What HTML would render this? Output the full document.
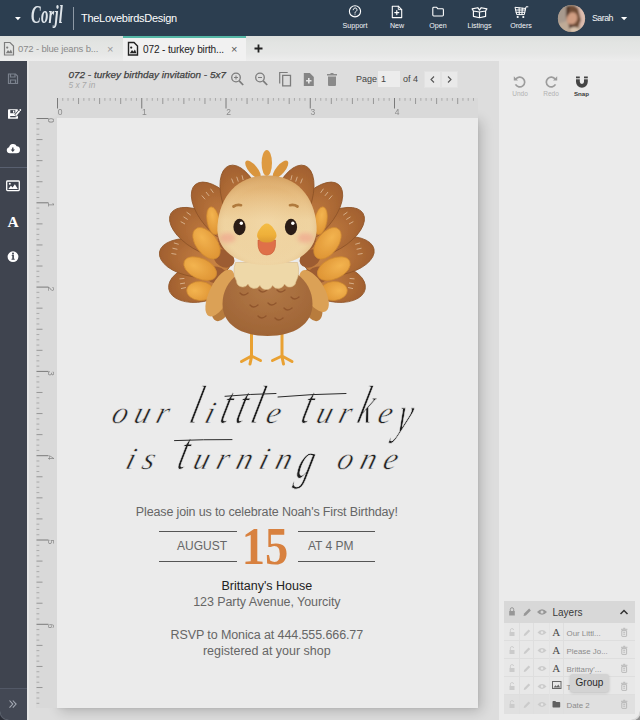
<!DOCTYPE html>
<html lang="en">
<head>
<meta charset="utf-8">
<title>Corjl - 072 - turkey birthday invitation - 5x7</title>
<style>
*{box-sizing:border-box;margin:0;padding:0}
html,body{width:640px;height:720px;overflow:hidden;background:#dcdcdc;font-family:"Liberation Sans",sans-serif;}
.abs{position:absolute}
#app{position:relative;width:640px;height:720px;overflow:hidden;background:#dddddd}
/* header */
#hdr{position:absolute;left:0;top:0;width:640px;height:36px;background:#2c3e50;color:#fff}
#hdr .logo{position:absolute;left:31px;top:0px;font-family:"Liberation Serif",serif;font-style:italic;font-weight:bold;font-size:26px;line-height:30px;color:#dfe5ea;letter-spacing:0.5px;transform:scaleX(.56);transform-origin:0 0;white-space:nowrap}
#hdr .div{position:absolute;left:73px;top:6.500px;width:1px;height:23px;background:#8d99a5}
#hdr .shop{position:absolute;left:81px;top:11px;font-size:11px;line-height:14px;color:#fff;letter-spacing:-0.28px;white-space:nowrap}
.nav{position:absolute;top:22px;font-size:7.1px;line-height:9px;color:#f4f6f8;text-align:center;width:50px;margin-left:-25px}
#hdr .user{position:absolute;left:592px;top:12px;font-size:8.8px;line-height:12px;color:#f4f6f8;letter-spacing:-0.5px}
/* tabs */
#tabs{position:absolute;left:0;top:36px;width:640px;height:25px;background:linear-gradient(#dcdfdd,#e2e4e2 25%,#e6e7e6 70%,#ededed)}
.tab{position:absolute;top:1px;height:24px;font-size:9.5px;line-height:24px;color:#8a8a8a;white-space:nowrap;letter-spacing:-0.15px}
.tab.act{font-size:10.100px;background:#f1f1f1;color:#222;border-top:2px solid #55b7a6;top:0;height:25px;line-height:23px}
.tab .x{position:absolute;top:0;font-size:11px;color:#9a9a9a}
.tab.act .x{color:#555}
/* sidebar */
#side{position:absolute;left:0;top:61px;width:27px;height:659px;background:#3f444f}
#side .ln{position:absolute;left:0;width:27px;height:1px;background:#596070}
/* toolbar */
#tool{position:absolute;left:28px;top:61px;width:471px;height:37px}
.ttl{position:absolute;left:40.500px;top:7.600px;font-size:9.950px;line-height:12px;font-style:italic;color:#3e3e3e;-webkit-text-stroke:.25px #3e3e3e;white-space:nowrap;letter-spacing:0}
.sub{position:absolute;left:40.500px;top:19.300px;font-size:8.300px;line-height:11px;font-style:italic;color:#a8a8a8;white-space:nowrap}
.pg{position:absolute;top:12px;font-size:9px;line-height:12px;color:#444;white-space:nowrap}
.pgin{position:absolute;left:350px;top:10px;width:22px;height:16px;background:#ececec;font-size:9px;line-height:16px;color:#444;padding-left:3px}
.pgb{position:absolute;top:10px;width:17px;height:17px;background:#e9e9e9;border:1px solid #e2e2e2}
/* page */
#page{position:absolute;left:57px;top:118px;width:421px;height:590px;background:#ebebeb;box-shadow:3px 3px 12px rgba(0,0,0,.2),0 0 3px rgba(0,0,0,.08)}
.inv{position:absolute;left:-0.700px;width:421px;text-align:center;white-space:nowrap;color:#666}
.script{font-family:"Liberation Serif",serif;font-style:italic;color:#1e1e1e;font-size:31px;line-height:60px;letter-spacing:6.5px;transform:skewX(-16deg);-webkit-text-stroke:.5px #ebebeb}
.script b{font-weight:normal;display:inline-block;transform:scaleY(1.75);transform-origin:50% 67.5%}
.script i{display:inline-block;transform:scaleY(1.7);transform-origin:50% 45%}
/* right */
#right{position:absolute;left:499px;top:61px;width:141px;height:659px;background:#ebebeb}
.rlab{position:absolute;top:28.500px;font-size:6.5px;line-height:8px;width:40px;margin-left:-20px;text-align:center;color:#b2b2b2}
#layers{position:absolute;left:5px;top:540px;width:131px;height:113px;background:#e8e8e8}
#layers .lh{position:absolute;left:0;top:0;width:131px;height:22px;background:#d8d8d8}
#layers .lh span{position:absolute;left:48.500px;top:5px;font-size:10px;line-height:14px;color:#3a3a3a}
.row{position:absolute;left:0;width:131px;height:18px;border-bottom:1px solid #dedede}
.row .nm{position:absolute;left:62.500px;top:4.500px;font-size:7.900px;line-height:11px;color:#8c8c8c;white-space:nowrap}
.row .ta{position:absolute;left:48.200px;top:1.500px;font-family:"Liberation Serif",serif;font-size:11px;line-height:14px;color:#4a4a4a}
.vl{position:absolute;top:22px;width:1px;height:91px;background:#dedede}
#tip{position:absolute;left:71px;top:613px;width:39px;height:18px;border-radius:3px;background:#d3d3d3;box-shadow:0 1px 3px rgba(0,0,0,.18);font-size:10px;line-height:18px;text-align:center;color:#2a2a2a}
</style>
</head>
<body>
<div id="app">

<!-- ===== top header ===== -->
<div id="hdr">
  <svg class="abs" style="left:15px;top:17px" width="6" height="4" viewBox="0 0 6 4"><path d="M0 0h5.800L2.900 3.200z" fill="#fff"/></svg>
  <div class="logo">Corjl</div>
  <div class="div"></div>
  <div class="shop">TheLovebirdsDesign</div>

  <svg class="abs" style="left:335px;top:0" width="210" height="22" viewBox="335 0 210 22" fill="none" stroke="#fff" stroke-width="1.1" stroke-linecap="round" stroke-linejoin="round">
    <!-- support -->
    <circle cx="355" cy="11.3" r="5.6"/>
    <path d="M353.2 9.8a1.9 1.9 0 1 1 2.9 1.6c-.7.5-1.1.8-1.1 1.7" stroke-width="1"/>
    <circle cx="355" cy="14.7" r=".55" fill="#fff" stroke="none"/>
    <!-- new -->
    <path d="M392.3 6.2h6l3.4 3.4v8h-9.4z"/><path d="M398.3 6.2v3.4h3.4" stroke-width=".9"/>
    <path d="M396.8 10.6v4M394.8 12.6h4" stroke-width="1.2"/>
    <!-- open -->
    <path d="M432.8 8.2q0-.9.9-.9h3l1.2 1.5h4.6q.9 0 .9.9v5.400q0 .9-.9.9h-8.800q-.9 0-.9-.9z"/>
    <!-- listings -->
    <path d="M473.400 11.200v5.200l6.100 1.300 6.100-1.300v-5.200M479.500 11.800v5.800M473.400 11l6.100 1 6.100-1M473.400 11l-1.300-2.100 5.700-1.200 1.700 2.400 1.700-2.400 5.700 1.200-1.300 2.100" stroke-width="1.150"/>
    <!-- orders -->
    <g transform="translate(1041.500 0) scale(-1 1)">
    <path d="M513.600 6.800h1.900l1.700 7.800h7.600l1.700-7.300-10.600 1.200M516.400 10h9.300M516.800 12.300h8.600M519.200 8.200l.4 6.400M522.400 7.800l-.2 6.800" stroke-width="1"/>
    <circle cx="518.200" cy="17" r="1.100" fill="#fff" stroke="none"/><circle cx="523.800" cy="17" r="1.100" fill="#fff" stroke="none"/>
    </g>
  </svg>
  <div class="nav" style="left:355px">Support</div>
  <div class="nav" style="left:397px">New</div>
  <div class="nav" style="left:438px">Open</div>
  <div class="nav" style="left:479.500px">Listings</div>
  <div class="nav" style="left:521px">Orders</div>

  <!-- avatar -->
  <svg class="abs" style="left:557px;top:4px" width="29" height="29" viewBox="0 0 29 29">
    <defs>
      <clipPath id="av"><circle cx="14.500" cy="14.500" r="13.600"/></clipPath>
      <filter id="avb" x="-20%" y="-20%" width="140%" height="140%"><feGaussianBlur stdDeviation="1.1"/></filter>
    </defs>
    <g clip-path="url(#av)">
      <rect width="29" height="29" fill="#a99a8b"/>
      <g filter="url(#avb)">
        <rect x="0" y="0" width="12" height="29" fill="#a89a8e"/>
        <path d="M19 0h10v29h-8z" fill="#dcbcae"/>
        <path d="M0 20l10-3 12 3 4 9H0z" fill="#bfab97"/>
        <path d="M9 3q6-3 12 1l3 12-3 8-9-2-3-9z" fill="#6e4b36"/>
        <ellipse cx="15" cy="14.500" rx="5.200" ry="6.300" fill="#d09d82" transform="rotate(20 15 14.500)"/>
        <path d="M10 2l2.500 0-1 9-2 1z" fill="#4a3428"/>
        <path d="M12 20l6 1-1 8h-5z" fill="#56392c"/>
        <ellipse cx="17" cy="26" rx="5" ry="3" fill="#d8c3ad"/>
      </g>
    </g>
  </svg>
  <div class="user">Sarah</div>
  <svg class="abs" style="left:620.800px;top:17px" width="7" height="4" viewBox="0 0 7 4"><path d="M0 0h6.200L3.100 3.200z" fill="#fff"/></svg>
</div>

<!-- ===== tabs ===== -->
<div id="tabs">
  <div class="tab" style="left:0;width:122px;padding-left:18px">072 - blue jeans b...<span class="x" style="left:107px">×</span></div>
  <div class="tab act" style="left:123px;width:123px;padding-left:20px">072 - turkey birth...<span class="x" style="left:108px">×</span></div>
  <svg class="abs" style="left:0;top:0" width="280" height="25" viewBox="0 0 280 25">
    <g fill="none" stroke="#7d7d7d" stroke-width="1.200"><path d="M4.500 6.500h5.500l3.500 3.500v9h-9z"/><path d="M5.800 17.200l2.200-3.200 1.500 1.700 1.400-2.300 1.600 3.800z" fill="#7d7d7d" stroke="none"/><circle cx="7.200" cy="11.600" r="1.100" fill="#7d7d7d" stroke="none"/></g>
    <g fill="none" stroke="#222" stroke-width="1.400"><path d="M128.500 6.500h5.500l3.500 3.500v9h-9z"/><path d="M129.800 17.200l2.200-3.200 1.500 1.700 1.400-2.300 1.600 3.800z" fill="#222" stroke="none"/><circle cx="131.200" cy="11.600" r="1.100" fill="#222" stroke="none"/></g>
    <path d="M258.500 8.500v8M254.500 12.500h8" stroke="#222" stroke-width="1.800"/>
  </svg>
</div>

<!-- ===== left sidebar ===== -->
<div id="side">
  <div class="ln" style="top:106px"></div>
  <div class="abs" style="left:0;top:628px;width:27px;height:31px;background:#434854"></div>
  <div class="ln" style="top:627px;background:#525866"></div>
  <svg class="abs" style="left:0;top:0" width="27" height="659" viewBox="0 61 27 659">
    <!-- save (disabled) -->
    <g fill="none" stroke="#7b818d" stroke-width="1.200"><path d="M8.500 74h7l2 2v7.500h-9z"/><path d="M10.500 74v3h4.500v-3M10.500 83.500v-3.500h5v3.500"/></g>
    <!-- save as -->
    <rect x="8" y="109.300" width="10" height="9.500" rx=".9" fill="#fff"/>
    <rect x="10.300" y="110.100" width="5" height="3.100" fill="#3f444f"/><rect x="13" y="110.600" width="1.300" height="2.100" fill="#fff"/>
    <rect x="10.200" y="116" width="5.600" height="1.300" fill="#3f444f"/>
    <path d="M15.600 115.600l4.600-5.400" stroke="#3f444f" stroke-width="3.200" fill="none"/>
    <path d="M15.700 115.500l3.800-4.500" stroke="#fff" stroke-width="1.700" fill="none"/><circle cx="20.300" cy="110" r=".9" fill="#fff"/>
    <!-- cloud download -->
    <path d="M9.800 153.300a3.100 3.100 0 0 1-.7-6.100 4 4 0 0 1 7.600-.9 3.500 3.500 0 0 1-.4 7z" fill="#fff"/>
    <path d="M12.100 147.600v2h-1.500l2.200 2.300 2.200-2.300h-1.500v-2z" fill="#3f444f"/>
    <!-- image -->
    <rect x="6.700" y="181" width="12.600" height="9.600" rx=".8" fill="none" stroke="#fff" stroke-width="1.300"/>
    <path d="M8.300 189l2.600-3.300 1.700 1.700 2.300-3.200 2.900 4.800z" fill="#fff"/><circle cx="9.800" cy="183.800" r="1" fill="#fff"/>
    <!-- text -->
    <text x="13" y="226.500" text-anchor="middle" font-family="Liberation Serif, serif" font-weight="bold" font-size="15.500" fill="#fff">A</text>
    <!-- info -->
    <circle cx="13" cy="256.700" r="5.400" fill="#fff"/>
    <path d="M12 254.800h1.900v4h.8v.9h-3.200v-.9h.8v-3.100h-.8z" fill="#3f444f"/><circle cx="13" cy="253.500" r=".95" fill="#3f444f"/>
    <!-- expand -->
    <path d="M9.500 700.500l3.300 3.600-3.300 3.600M12.800 700.500l3.300 3.600-3.300 3.600" fill="none" stroke="#a3a8b2" stroke-width="1.100"/>
  </svg>
</div>
<div class="abs" style="left:27px;top:61px;width:2px;height:659px;background:#e6e6e6"></div>

<!-- ===== canvas toolbar ===== -->
<div id="tool">
  <div class="ttl">072 - turkey birthday invitation - 5x7</div>
  <div class="sub">5 x 7 in</div>
  <svg class="abs" style="left:200px;top:8.500px" width="120" height="20" viewBox="228 69 120 20">
    <g fill="none" stroke="#7c7c7c" stroke-width="1.300">
      <circle cx="236" cy="76.500" r="4.300"/><path d="M239.200 79.800l4 4.200" stroke-width="1.700"/><path d="M234 76.500h4M236 74.500v4" stroke-width="1"/>
      <circle cx="260" cy="76.500" r="4.300"/><path d="M263.200 79.800l4 4.200" stroke-width="1.700"/><path d="M258 76.500h4" stroke-width="1"/>
      <path d="M282.700 74.300h7.800v10.500h-7.800z"/><path d="M279.700 82.500v-11h8" stroke-width="1.200"/>
    </g>
    <path d="M303.800 72h6l4 4v9h-10z" fill="#858585"/><path d="M308.800 77v5.400M306.100 79.700h5.400" stroke="#e6e6e6" stroke-width="1.600"/>
    <path d="M328 75.500h8v8.500q0 1-1 1h-6q-1 0-1-1zM327 73h3.200l.6-1h2.400l.6 1h3.200v1.500h-10z" fill="#8a8a8a"/>
  </svg>
  <div class="pg" style="left:328px">Page</div>
  <div class="pgin">1</div>
  <div class="pg" style="left:375px">of 4</div>
  <div class="pgb" style="left:396px"></div>
  <div class="pgb" style="left:413px"></div>
  <svg class="abs" style="left:396px;top:10px" width="34" height="17" viewBox="0 0 34 17"><path d="M10 5.500l-3 3 3 3M24 5.500l3 3-3 3" fill="none" stroke="#555" stroke-width="1.100"/></svg>
</div>

<!-- ===== rulers ===== -->
<svg class="abs" style="left:0;top:0;z-index:1" width="640" height="720" viewBox="0 0 640 720" font-family="Liberation Sans, sans-serif">
  <rect x="57" y="98" width="421" height="20" fill="#d9d9d9"/>
  <rect x="36" y="118" width="21" height="590" fill="#d9d9d9"/>
<path d="M62.77 98v2.8M68.03 98v2.8M73.30 98v2.8M83.83 98v2.8M89.09 98v2.8M94.36 98v2.8M104.89 98v2.8M110.16 98v2.8M115.42 98v2.8M125.95 98v2.8M131.22 98v2.8M136.48 98v2.8M147.02 98v2.8M152.28 98v2.8M157.55 98v2.8M168.08 98v2.8M173.34 98v2.8M178.61 98v2.8M189.14 98v2.8M194.41 98v2.8M199.67 98v2.8M210.20 98v2.8M215.47 98v2.8M220.73 98v2.8M231.27 98v2.8M236.53 98v2.8M241.80 98v2.8M252.33 98v2.8M257.59 98v2.8M262.86 98v2.8M273.39 98v2.8M278.66 98v2.8M283.92 98v2.8M294.45 98v2.8M299.72 98v2.8M304.98 98v2.8M315.52 98v2.8M320.78 98v2.8M326.05 98v2.8M336.58 98v2.8M341.84 98v2.8M347.11 98v2.8M357.64 98v2.8M362.91 98v2.8M368.17 98v2.8M378.70 98v2.8M383.97 98v2.8M389.23 98v2.8M399.77 98v2.8M405.03 98v2.8M410.30 98v2.8M420.83 98v2.8M426.09 98v2.8M431.36 98v2.8M441.89 98v2.8M447.16 98v2.8M452.42 98v2.8M462.95 98v2.8M468.22 98v2.8M473.48 98v2.8" stroke="#a6a6a6" stroke-width="0.9" fill="none"/>
<path d="M78.56 98v6M99.62 98v6M120.69 98v6M162.81 98v6M183.88 98v6M204.94 98v6M247.06 98v6M268.12 98v6M289.19 98v6M331.31 98v6M352.38 98v6M373.44 98v6M415.56 98v6M436.62 98v6M457.69 98v6" stroke="#8e8e8e" stroke-width="0.9" fill="none"/>
<path d="M57.50 98v10.5M141.75 98v10.5M226.00 98v10.5M310.25 98v10.5M394.50 98v10.5" stroke="#7a7a7a" stroke-width="1" fill="none"/>
<text x="57.8" y="115.3" font-size="8.5" fill="#8a8a8a">0</text>
<text x="142.1" y="115.3" font-size="8.5" fill="#8a8a8a">1</text>
<text x="226.3" y="115.3" font-size="8.5" fill="#8a8a8a">2</text>
<text x="310.6" y="115.3" font-size="8.5" fill="#8a8a8a">3</text>
<text x="394.8" y="115.3" font-size="8.5" fill="#8a8a8a">4</text>
<path d="M36.5 123.77h2.8M36.5 129.04h2.8M36.5 134.31h2.8M36.5 144.84h2.8M36.5 150.11h2.8M36.5 155.38h2.8M36.5 165.92h2.8M36.5 171.19h2.8M36.5 176.46h2.8M36.5 186.99h2.8M36.5 192.26h2.8M36.5 197.53h2.8M36.5 208.07h2.8M36.5 213.34h2.8M36.5 218.61h2.8M36.5 229.14h2.8M36.5 234.41h2.8M36.5 239.68h2.8M36.5 250.22h2.8M36.5 255.49h2.8M36.5 260.76h2.8M36.5 271.29h2.8M36.5 276.56h2.8M36.5 281.83h2.8M36.5 292.37h2.8M36.5 297.64h2.8M36.5 302.91h2.8M36.5 313.44h2.8M36.5 318.71h2.8M36.5 323.98h2.8M36.5 334.52h2.8M36.5 339.79h2.8M36.5 345.06h2.8M36.5 355.59h2.8M36.5 360.86h2.8M36.5 366.13h2.8M36.5 376.67h2.8M36.5 381.94h2.8M36.5 387.21h2.8M36.5 397.74h2.8M36.5 403.01h2.8M36.5 408.28h2.8M36.5 418.82h2.8M36.5 424.09h2.8M36.5 429.36h2.8M36.5 439.89h2.8M36.5 445.16h2.8M36.5 450.43h2.8M36.5 460.97h2.8M36.5 466.24h2.8M36.5 471.51h2.8M36.5 482.04h2.8M36.5 487.31h2.8M36.5 492.58h2.8M36.5 503.12h2.8M36.5 508.39h2.8M36.5 513.66h2.8M36.5 524.19h2.8M36.5 529.46h2.8M36.5 534.73h2.8M36.5 545.27h2.8M36.5 550.54h2.8M36.5 555.81h2.8M36.5 566.34h2.8M36.5 571.61h2.8M36.5 576.88h2.8M36.5 587.42h2.8M36.5 592.69h2.8M36.5 597.96h2.8M36.5 608.49h2.8M36.5 613.76h2.8M36.5 619.03h2.8M36.5 629.57h2.8M36.5 634.84h2.8M36.5 640.11h2.8M36.5 650.64h2.8M36.5 655.91h2.8M36.5 661.18h2.8M36.5 671.72h2.8M36.5 676.99h2.8M36.5 682.26h2.8M36.5 692.79h2.8M36.5 698.06h2.8M36.5 703.33h2.8" stroke="#a6a6a6" stroke-width="0.9" fill="none"/>
<path d="M36.5 139.57h6M36.5 160.65h6M36.5 181.72h6M36.5 223.88h6M36.5 244.95h6M36.5 266.02h6M36.5 308.17h6M36.5 329.25h6M36.5 350.32h6M36.5 392.47h6M36.5 413.55h6M36.5 434.62h6M36.5 476.77h6M36.5 497.85h6M36.5 518.92h6M36.5 561.08h6M36.5 582.15h6M36.5 603.22h6M36.5 645.38h6M36.5 666.45h6M36.5 687.52h6" stroke="#8e8e8e" stroke-width="0.9" fill="none"/>
<path d="M36.5 118.50h12M36.5 202.80h12M36.5 287.10h12M36.5 371.40h12M36.5 455.70h12M36.5 540.00h12M36.5 624.30h12" stroke="#7a7a7a" stroke-width="1" fill="none"/>
<text transform="translate(48.3 118.0) rotate(90)" font-size="8.5" fill="#8a8a8a">0</text>
<text transform="translate(48.3 202.3) rotate(90)" font-size="8.5" fill="#8a8a8a">1</text>
<text transform="translate(48.3 286.6) rotate(90)" font-size="8.5" fill="#8a8a8a">2</text>
<text transform="translate(48.3 370.9) rotate(90)" font-size="8.5" fill="#8a8a8a">3</text>
<text transform="translate(48.3 455.2) rotate(90)" font-size="8.5" fill="#8a8a8a">4</text>
<text transform="translate(48.3 539.5) rotate(90)" font-size="8.5" fill="#8a8a8a">5</text>
<text transform="translate(48.3 623.8) rotate(90)" font-size="8.5" fill="#8a8a8a">6</text>
</svg>

<!-- ===== page ===== -->
<div id="page">
  <div class="inv script" style="top:265px;letter-spacing:6.700px">our <b>l</b>i<b>t</b><b>t</b><b>l</b>e <b>t</b>ur<b>k</b>e<i>y</i></div>
  <div class="inv script" style="top:310.500px;letter-spacing:7.600px">is <b>t</b>urnin<i>g</i> one</div>
  <svg class="abs" style="left:0;top:0" width="421" height="590" viewBox="57 118 421 590" fill="none" stroke="#2a2a2a" stroke-width="1" stroke-linecap="round">
    <path d="M225 396.300q26-2.300 51-2.800"/><path d="M278 397q34-3 68-3.500"/><path d="M174.500 440.600q29-1.200 57.500-1"/>
  </svg>
  <div class="inv" style="top:386px;font-size:12.500px;line-height:16px;letter-spacing:-0.145px">Please join us to celebrate Noah's First Birthday!</div>
  <div class="abs" style="left:102px;top:413px;width:78px;height:1px;background:#555"></div>
  <div class="abs" style="left:102px;top:443px;width:78px;height:1px;background:#555"></div>
  <div class="abs" style="left:241px;top:413px;width:77px;height:1px;background:#555"></div>
  <div class="abs" style="left:241px;top:443px;width:77px;height:1px;background:#555"></div>
  <div class="abs" style="left:120px;top:420px;font-size:12px;line-height:16px;color:#666">AUGUST</div>
  <div class="abs" style="left:251px;top:420px;font-size:12px;line-height:16px;color:#666;white-space:nowrap">AT 4 PM</div>
  <div class="abs" style="left:178px;top:400px;width:60px;text-align:center;font-family:'Liberation Serif',serif;font-weight:bold;font-size:53.500px;line-height:56px;color:#d8813f;transform:scaleX(.868)">15</div>
  <div class="inv" style="top:460px;font-size:12.500px;line-height:16px;color:#222">Brittany's House</div>
  <div class="inv" style="top:476px;font-size:12.500px;line-height:16px;letter-spacing:-0.07px">123 Party Avenue, Yourcity</div>
  <div class="inv" style="top:509px;font-size:12.500px;line-height:16px;letter-spacing:-0.1px">RSVP to Monica at 444.555.666.77</div>
  <div class="inv" style="top:525px;font-size:12.500px;line-height:16px">registered at your shop</div>
</div>

<!-- ===== turkey ===== -->
<svg class="abs" style="left:0;top:0" width="640" height="720" viewBox="0 0 640 720">
  <defs>
    <radialGradient id="fd" cx="50%" cy="80%" r="85%"><stop offset="0" stop-color="#c98443"/><stop offset=".5" stop-color="#b5713a"/><stop offset="1" stop-color="#9e5d2d"/></radialGradient>
    <radialGradient id="fo" cx="50%" cy="30%" r="80%"><stop offset="0" stop-color="#f3b450"/><stop offset="1" stop-color="#dc9030"/></radialGradient>
    <linearGradient id="hl" x1="0" y1="0" x2="0" y2="1"><stop offset="0" stop-color="#d9a461"/><stop offset=".22" stop-color="#e6bc80"/><stop offset=".5" stop-color="#efd3a0"/><stop offset="1" stop-color="#efd5a4"/></linearGradient>
    <radialGradient id="hd" cx="50%" cy="55%" r="56%"><stop offset="0" stop-color="#f4dcae" stop-opacity=".5"/><stop offset=".75" stop-color="#eccb96" stop-opacity="0"/><stop offset="1" stop-color="#cf9a5c" stop-opacity=".55"/></radialGradient>
    <linearGradient id="bk" x1="0" y1="0" x2="0" y2="1"><stop offset="0" stop-color="#f4bd45"/><stop offset=".6" stop-color="#eeb03a"/><stop offset="1" stop-color="#dc9a30"/></linearGradient>
    <radialGradient id="bd" cx="50%" cy="35%" r="75%"><stop offset="0" stop-color="#b27947"/><stop offset="1" stop-color="#9c6133"/></radialGradient>
    <filter id="soft" x="-10%" y="-10%" width="120%" height="120%"><feGaussianBlur stdDeviation=".55"/></filter>
    <filter id="soft2" x="-30%" y="-30%" width="160%" height="160%"><feGaussianBlur stdDeviation="2.200"/></filter>
  </defs>
  <g filter="url(#soft)">
<ellipse cx="200.2" cy="283.0" rx="18.8" ry="32.0" transform="rotate(-101 200.2 283.0)" fill="url(#fd)" stroke="#8e5327" stroke-width=".8"/>
<ellipse cx="195.0" cy="258.0" rx="18.8" ry="36.0" transform="rotate(-80.5 195.0 258.0)" fill="url(#fd)" stroke="#8e5327" stroke-width=".8"/>
<ellipse cx="202.8" cy="232.2" rx="18.8" ry="37.0" transform="rotate(-59.5 202.8 232.2)" fill="url(#fd)" stroke="#8e5327" stroke-width=".8"/>
<ellipse cx="219.1" cy="212.9" rx="18.8" ry="37.0" transform="rotate(-40 219.1 212.9)" fill="url(#fd)" stroke="#8e5327" stroke-width=".8"/>
<ellipse cx="241.7" cy="200.5" rx="18.8" ry="37.0" transform="rotate(-20 241.7 200.5)" fill="url(#fd)" stroke="#8e5327" stroke-width=".8"/>
<ellipse cx="333.8" cy="283.0" rx="18.8" ry="32.0" transform="rotate(101 333.8 283.0)" fill="url(#fd)" stroke="#8e5327" stroke-width=".8"/>
<ellipse cx="338.7" cy="256.1" rx="18.8" ry="36.0" transform="rotate(79 338.7 256.1)" fill="url(#fd)" stroke="#8e5327" stroke-width=".8"/>
<ellipse cx="331.2" cy="232.2" rx="18.8" ry="37.0" transform="rotate(59.5 331.2 232.2)" fill="url(#fd)" stroke="#8e5327" stroke-width=".8"/>
<ellipse cx="314.9" cy="212.9" rx="18.8" ry="37.0" transform="rotate(40 314.9 212.9)" fill="url(#fd)" stroke="#8e5327" stroke-width=".8"/>
<ellipse cx="292.3" cy="200.5" rx="18.8" ry="37.0" transform="rotate(20 292.3 200.5)" fill="url(#fd)" stroke="#8e5327" stroke-width=".8"/>
<path d="M181.0 288.6L185.9 287.5" stroke="#f2dcc0" stroke-width="0.8" opacity=".75"/>
<path d="M180.1 283.8L185.0 283.0" stroke="#f2dcc0" stroke-width="0.8" opacity=".75"/>
<path d="M179.5 278.9L184.4 278.4" stroke="#f2dcc0" stroke-width="0.8" opacity=".75"/>
<path d="M171.4 253.5L176.3 254.3" stroke="#f2dcc0" stroke-width="0.8" opacity=".75"/>
<path d="M172.5 248.2L177.4 249.3" stroke="#f2dcc0" stroke-width="0.8" opacity=".75"/>
<path d="M173.9 242.9L178.7 244.3" stroke="#f2dcc0" stroke-width="0.8" opacity=".75"/>
<path d="M180.7 221.6L185.0 224.0" stroke="#f2dcc0" stroke-width="0.8" opacity=".75"/>
<path d="M183.5 216.8L187.7 219.5" stroke="#f2dcc0" stroke-width="0.8" opacity=".75"/>
<path d="M186.6 212.2L190.7 215.1" stroke="#f2dcc0" stroke-width="0.8" opacity=".75"/>
<path d="M201.8 195.5L205.1 199.3" stroke="#f2dcc0" stroke-width="0.8" opacity=".75"/>
<path d="M206.0 192.0L209.1 195.9" stroke="#f2dcc0" stroke-width="0.8" opacity=".75"/>
<path d="M210.5 188.7L213.4 192.8" stroke="#f2dcc0" stroke-width="0.8" opacity=".75"/>
<path d="M231.6 178.6L233.4 183.3" stroke="#f2dcc0" stroke-width="0.8" opacity=".75"/>
<path d="M236.7 176.8L238.3 181.6" stroke="#f2dcc0" stroke-width="0.8" opacity=".75"/>
<path d="M242.0 175.3L243.2 180.1" stroke="#f2dcc0" stroke-width="0.8" opacity=".75"/>
<path d="M354.5 278.9L349.6 278.4" stroke="#f2dcc0" stroke-width="0.8" opacity=".75"/>
<path d="M353.9 283.8L349.0 283.0" stroke="#f2dcc0" stroke-width="0.8" opacity=".75"/>
<path d="M353.0 288.6L348.1 287.5" stroke="#f2dcc0" stroke-width="0.8" opacity=".75"/>
<path d="M360.1 242.9L355.3 244.3" stroke="#f2dcc0" stroke-width="0.8" opacity=".75"/>
<path d="M361.5 248.2L356.6 249.3" stroke="#f2dcc0" stroke-width="0.8" opacity=".75"/>
<path d="M362.6 253.5L357.7 254.3" stroke="#f2dcc0" stroke-width="0.8" opacity=".75"/>
<path d="M347.4 212.2L343.3 215.1" stroke="#f2dcc0" stroke-width="0.8" opacity=".75"/>
<path d="M350.5 216.8L346.3 219.5" stroke="#f2dcc0" stroke-width="0.8" opacity=".75"/>
<path d="M353.3 221.6L349.0 224.0" stroke="#f2dcc0" stroke-width="0.8" opacity=".75"/>
<path d="M323.5 188.7L320.6 192.8" stroke="#f2dcc0" stroke-width="0.8" opacity=".75"/>
<path d="M328.0 192.0L324.9 195.9" stroke="#f2dcc0" stroke-width="0.8" opacity=".75"/>
<path d="M332.2 195.5L328.9 199.3" stroke="#f2dcc0" stroke-width="0.8" opacity=".75"/>
<path d="M292.0 175.3L290.8 180.1" stroke="#f2dcc0" stroke-width="0.8" opacity=".75"/>
<path d="M297.3 176.8L295.7 181.6" stroke="#f2dcc0" stroke-width="0.8" opacity=".75"/>
<path d="M302.4 178.6L300.6 183.3" stroke="#f2dcc0" stroke-width="0.8" opacity=".75"/>
<ellipse cx="224.0" cy="258.5" rx="8.5" ry="11.0" transform="rotate(-60 224.0 258.5)" fill="#9c5c30"/>
<ellipse cx="216.0" cy="275.0" rx="8.5" ry="11.0" transform="rotate(-80 216.0 275.0)" fill="#9c5c30"/>
<ellipse cx="227.0" cy="243.0" rx="7.5" ry="11.0" transform="rotate(-45 227.0 243.0)" fill="#9c5c30"/>
<ellipse cx="310.0" cy="258.5" rx="8.5" ry="11.0" transform="rotate(60 310.0 258.5)" fill="#9c5c30"/>
<ellipse cx="318.0" cy="275.0" rx="8.5" ry="11.0" transform="rotate(80 318.0 275.0)" fill="#9c5c30"/>
<ellipse cx="307.0" cy="243.0" rx="7.5" ry="11.0" transform="rotate(45 307.0 243.0)" fill="#9c5c30"/>
<ellipse cx="200.2" cy="291.0" rx="9.5" ry="13.5" transform="rotate(-86 200.2 291.0)" fill="url(#fo)" stroke="#cf8a30" stroke-width=".7"/>
<ellipse cx="200.2" cy="268.6" rx="10.2" ry="17.5" transform="rotate(-65 200.2 268.6)" fill="url(#fo)" stroke="#cf8a30" stroke-width=".7"/>
<ellipse cx="213.2" cy="220.7" rx="6.2" ry="14.0" transform="rotate(-10 213.2 220.7)" fill="url(#fo)" stroke="#cf8a30" stroke-width=".7"/>
<ellipse cx="206.5" cy="243.3" rx="10.5" ry="18.0" transform="rotate(-37 206.5 243.3)" fill="url(#fo)" stroke="#cf8a30" stroke-width=".7"/>
<ellipse cx="333.8" cy="291.0" rx="9.5" ry="13.5" transform="rotate(86 333.8 291.0)" fill="url(#fo)" stroke="#cf8a30" stroke-width=".7"/>
<ellipse cx="333.8" cy="268.6" rx="10.2" ry="17.5" transform="rotate(65 333.8 268.6)" fill="url(#fo)" stroke="#cf8a30" stroke-width=".7"/>
<ellipse cx="320.8" cy="220.7" rx="6.2" ry="14.0" transform="rotate(10 320.8 220.7)" fill="url(#fo)" stroke="#cf8a30" stroke-width=".7"/>
<ellipse cx="327.5" cy="243.3" rx="10.5" ry="18.0" transform="rotate(37 327.5 243.3)" fill="url(#fo)" stroke="#cf8a30" stroke-width=".7"/>
    <!-- legs -->
    <g fill="none" stroke="#e9a133" stroke-linecap="round" stroke-width="3">
      <path d="M251.500 332v25M251.500 356l-10 5.500M251.500 356l9 4.500M251.500 357l-1.500 7"/>
      <path d="M282 332v25M282 356l-9.500 4.500M282 356l10 5.500M282 357l1.500 7"/>
    </g>
    <!-- wings -->
    <ellipse cx="222.500" cy="303" rx="9.500" ry="19" transform="rotate(20 222.500 303)" fill="#b87c3e"/>
    <ellipse cx="311.500" cy="303" rx="9.500" ry="19" transform="rotate(-20 311.500 303)" fill="#b87c3e"/>
    <ellipse cx="220" cy="293" rx="10.500" ry="25.500" transform="rotate(26 220 293)" fill="#dba157"/>
    <ellipse cx="314" cy="291" rx="10.500" ry="23.500" transform="rotate(-30 314 291)" fill="#dba157"/>
    <!-- body -->
    <path d="M267.500 264c20 0 45 14 45 40c0 20-18 32-45 32s-45-12-45-32c0-26 25-40 45-40z" fill="url(#bd)"/>
    <g fill="none" stroke="#8a4f28" stroke-width="1.300" stroke-linecap="round" opacity=".8">
      <path d="M240 293q3.500 4 8 0M259 290q3.500 4 8 0M277 290q3.500 4 8 0M291 297q3.500 4 8 0M250 305q3.500 4 8 0M268 303q3.500 4 8 0M284 308q3.500 4 8 0M258 316q3.500 4 8 0M275 318q3.500 4 8 0"/>
    </g>
    <!-- bib -->
    <path d="M235.500 262.500h62q3 11-1.500 19a6.200 6.200 0 0 1-11.500 2.500a6.800 6.800 0 0 1-12 1.500a6.800 6.800 0 0 1-12.500 0a6.800 6.800 0 0 1-12-1.500a6.200 6.200 0 0 1-11.500-3q-4.500-8-1-18.500z" fill="#eed8a8" stroke="#d8b884" stroke-width=".6"/>
    <!-- tuft -->
    <ellipse cx="266.800" cy="163" rx="5.200" ry="13" fill="#de9a40"/>
    <ellipse cx="253" cy="169.500" rx="4.400" ry="11" transform="rotate(-40 253 169.500)" fill="#d9953e"/>
    <ellipse cx="280.500" cy="169.500" rx="4.400" ry="11" transform="rotate(40 280.500 169.500)" fill="#d9953e"/>
    <!-- head -->
    <path d="M267 175.500C296 175.500 314.500 196 316.500 226C318 250 298 265 267 265C236 265 216 250 217.500 226C219.500 196 238 175.500 267 175.500z" fill="url(#hl)"/>
    <path d="M267 175.500C296 175.500 314.500 196 316.500 226C318 250 298 265 267 265C236 265 216 250 217.500 226C219.500 196 238 175.500 267 175.500z" fill="url(#hd)"/>
    <!-- cheeks -->
    <ellipse cx="227.500" cy="238" rx="8" ry="5" fill="#f09a88" opacity=".55" filter="url(#soft2)"/>
    <ellipse cx="305.500" cy="238" rx="8" ry="5" fill="#f09a88" opacity=".55" filter="url(#soft2)"/>
    <!-- brows -->
    <path d="M233.500 206.500q3.500-2.300 7.500-1.300" stroke="#b07a3c" stroke-width="2.700" stroke-linecap="round" fill="none"/>
    <path d="M290 205.200q4-1 7.500 1.300" stroke="#b07a3c" stroke-width="2.700" stroke-linecap="round" fill="none"/>
    <!-- eyes -->
    <ellipse cx="239.500" cy="227" rx="6.100" ry="8.200" fill="#2b1d16"/>
    <ellipse cx="291" cy="227" rx="6.100" ry="8.200" fill="#2b1d16"/>
    <circle cx="241.300" cy="223.300" r="1.700" fill="#fff"/><circle cx="292.800" cy="223.300" r="1.700" fill="#fff"/>
    <!-- mouth + beak -->
    <path d="M258 240h17.500q1 15-8.750 15t-8.750-15z" fill="#df7048" stroke="#c85a38" stroke-width=".6"/>
    <path d="M266.800 223.500q3.500 0 7 5.500q3.500 4.500 2.500 8q-2 5.500-9.500 5.500t-9.500-5.500q-1-3.500 2.500-8q3.500-5.500 7-5.500z" fill="url(#bk)"/>
  </g>
</svg>

<!-- ===== right panel ===== -->
<div id="right">
  <svg class="abs" style="left:0;top:0" width="141" height="40" viewBox="499 61 141 40">
    <g fill="none" stroke="#9c9c9c" stroke-width="1.700">
      <path d="M515.800 79.200a4.900 4.900 0 1 1-.3 5.200"/><path d="M513.800 76.300v4.200h4.200z" fill="#9c9c9c" stroke="none"/>
      <path d="M555.200 79.200a4.900 4.900 0 1 0 .3 5.200"/><path d="M557.200 76.300v4.200h-4.200z" fill="#9c9c9c" stroke="none"/>
    </g>
    <path d="M576 76.500h3.800v5.300a2.100 2.100 0 0 0 4.200 0v-5.300h3.800v5.300a5.900 5.900 0 0 1-11.800 0z" fill="#444"/>
    <path d="M575.500 78.800h4.800M583.500 78.800h4.800" stroke="#ebebeb" stroke-width="1"/>
  </svg>
  <div class="rlab" style="left:21px">Undo</div>
  <div class="rlab" style="left:52px">Redo</div>
  <div class="rlab" style="left:82.500px;color:#3a3a3a;font-weight:bold;font-size:6.200px">Snap</div>

  <div id="layers">
    <div class="lh"><span>Layers</span></div>
    <div class="row" style="top:22px"><span class="ta">A</span><span class="nm">Our Littl...</span></div>
    <div class="row" style="top:40px"><span class="ta">A</span><span class="nm">Please Jo...</span></div>
    <div class="row" style="top:58px"><span class="ta">A</span><span class="nm">Brittany'...</span></div>
    <div class="row" style="top:76px"><span class="nm">Turkey</span></div>
    <div class="row" style="top:94px;background:#e0e0e0;height:19px;border-bottom:0"><span class="nm">Date 2</span></div>
    <div class="vl" style="left:45px;background:#e3e3e3"></div><div class="vl" style="left:15px"></div><div class="vl" style="left:29px"></div><div class="vl" style="left:59px"></div>
    <svg class="abs" style="left:0;top:0" width="131" height="113" viewBox="504 601 131 113">
      <!-- header icons -->
      <g fill="#979797">
        <path d="M509.200 611h5.600v4.600h-5.600z"/><path d="M510.300 611v-1.600a1.700 1.700 0 0 1 3.400 0v1.600" fill="none" stroke="#979797" stroke-width="1"/>
        <path d="M523.500 616l.6-2.400 5-5 1.800 1.800-5 5z"/>
        <path d="M537 612q5-5.500 10 0q-5 5.500-10 0z"/><circle cx="542" cy="612" r="1.500" fill="#d8d8d8"/>
      </g>
      <path d="M620.500 614l3.500-3.500 3.500 3.500" fill="none" stroke="#333" stroke-width="1.500"/>
      <!-- row icons -->
      <g id="ri" fill="#cbcbcb">
        <path d="M509.500 632h5v4h-5z"/><path d="M510.400 632v-1.700a1.600 1.600 0 0 1 3.200-.3" fill="none" stroke="#cbcbcb" stroke-width=".9"/>
        <path d="M523.700 636l.5-2.100 4.400-4.400 1.600 1.600-4.400 4.400z"/>
        <path d="M537.500 632.500q4.500-4.800 9 0q-4.500 4.800-9 0z"/><circle cx="542" cy="632.500" r="1.200" fill="#e8e8e8"/>
        <path d="M621.800 630.600h4.800v5.300q0 .5-.5.500h-3.800q-.5 0-.5-.5z" fill="none" stroke="#b4b4b4" stroke-width=".9"/><path d="M621 629.300h6.400M623.200 628.300h2M623.200 632.300h2M623.200 634.200h2" fill="none" stroke="#b4b4b4" stroke-width=".9"/>
      </g>
      <use href="#ri" y="18"/><use href="#ri" y="36"/><use href="#ri" y="54"/><use href="#ri" y="72"/>
      <rect x="552.500" y="681.500" width="8.500" height="7" fill="none" stroke="#666" stroke-width="1"/><path d="M553.500 687.500l2-2.300 1.300 1.200 1.500-1.900 1.900 3z" fill="#666"/>
      <path d="M552.500 701.800q0-.7.700-.7h2.100l.9 1h3.300q.7 0 .7.700v4q0 .7-.7.700h-6.300q-.7 0-.7-.7z" fill="#606060"/>
    </svg>
  </div>
  <div id="tip">Group</div>
</div>

<!-- window corner artefacts -->
<svg class="abs" style="left:0;top:708px;z-index:5" width="640" height="12" viewBox="0 708 640 12">
  <path d="M0 713.500A6.500 6.500 0 0 0 6.500 720H0z" fill="#2b2e37"/><path d="M0 711.500A8.500 8.500 0 0 0 8.500 720" fill="none" stroke="#5b616d" stroke-width="1"/>
  <path d="M640 713A7 7 0 0 1 633 720H640z" fill="#8f8f8f"/><path d="M640 711.500A8.500 8.500 0 0 1 631.500 720" fill="none" stroke="#d6d6d6" stroke-width="1.200"/>
</svg>

</div>
</body>
</html>
